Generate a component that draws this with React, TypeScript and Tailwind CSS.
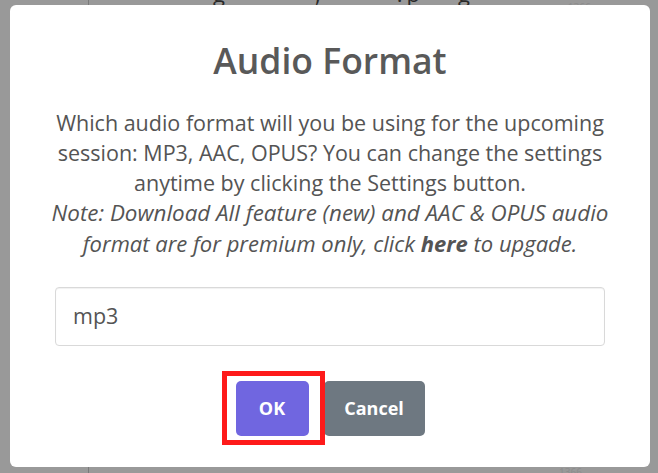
export default function App() {
  return (
    <div
      className="relative h-[473px] w-[658px] overflow-hidden bg-[#999999]"
      style={{ fontFamily: "'Open Sans', 'Noto Sans', sans-serif" }}
    >
      {/* page behind the overlay */}
      <div className="flex h-full">
        <div className="w-[88px] shrink-0" />
        <div className="flex h-full flex-1 flex-col justify-between border-l border-[#7a7a7a]">
          <div className="relative h-[6px] overflow-hidden">
            <div className="flex -mt-[19px] text-[22px] leading-[24px] text-[#2a2a2a]">
              <span className="ml-[124px]">g</span>
              <span className="ml-[90px]">,</span>
              <span className="ml-[76px]">.</span>
              <span className="ml-[4px]">p</span>
              <span className="ml-[38px]">g</span>
              <span className="ml-[98px] text-[10px] text-[#8c8c8c] mt-[14px]">1366</span>
            </div>
          </div>
          <div className="flex h-[6px] items-start overflow-hidden">
            <span className="ml-[470px] text-[10px] leading-[10px] text-[#8c8c8c]">1366</span>
          </div>
        </div>
      </div>

      {/* modal overlay */}
      <div className="absolute inset-0 flex items-start justify-center pt-[5px] pl-[2px]">
        <div className="flex h-[461.5px] w-[640px] flex-col items-center rounded-[6px] bg-white">
          <h2 className="pt-[30px] text-center text-[35.5px] font-semibold leading-[50px] text-[#595959]">
            Audio Format
          </h2>
          <div className="mt-[23px] w-[568px] text-center leading-[30px] text-[#545454]">
            <div className="whitespace-nowrap text-[21.5px]">Which audio format will you be using for the upcoming</div>
            <div className="whitespace-nowrap text-[21.5px]">session: MP3, AAC, OPUS? You can change the settings</div>
            <div className="whitespace-nowrap text-[21.5px]">anytime by clicking the Settings button.</div>
            <div className="whitespace-nowrap text-[22.4px] italic">Note: Download All feature (new) and AAC &amp; OPUS audio</div>
            <div className="whitespace-nowrap text-[22px] italic">
              format are for premium only, click <b className="font-bold">here</b> to upgade.
            </div>
          </div>
          <div className="mt-[28.5px] flex h-[59px] w-[550px] items-center rounded-[4px] border border-[#d9d9d9] px-[17px] text-[21.5px] text-[#545454] shadow-[inset_0_1px_1px_rgba(0,0,0,0.06)]">
            mp3
          </div>
          <div className="mt-[35px] flex items-center gap-[15px]">
            <div className="relative">
              <button className="flex h-[55px] w-[73px] items-center justify-center rounded-[5px] bg-[#7066e0] text-[18px] font-bold text-white">
                OK
              </button>
              <div className="pointer-events-none absolute -left-[14px] -right-[16px] -top-[10px] -bottom-[9px] border-[5px] border-[#fe1a1a]" />
            </div>
            <button className="flex h-[55px] w-[101px] items-center justify-center rounded-[5px] bg-[#6e7881] text-[18px] font-bold text-white">
              Cancel
            </button>
          </div>
        </div>
      </div>
    </div>
  );
}
